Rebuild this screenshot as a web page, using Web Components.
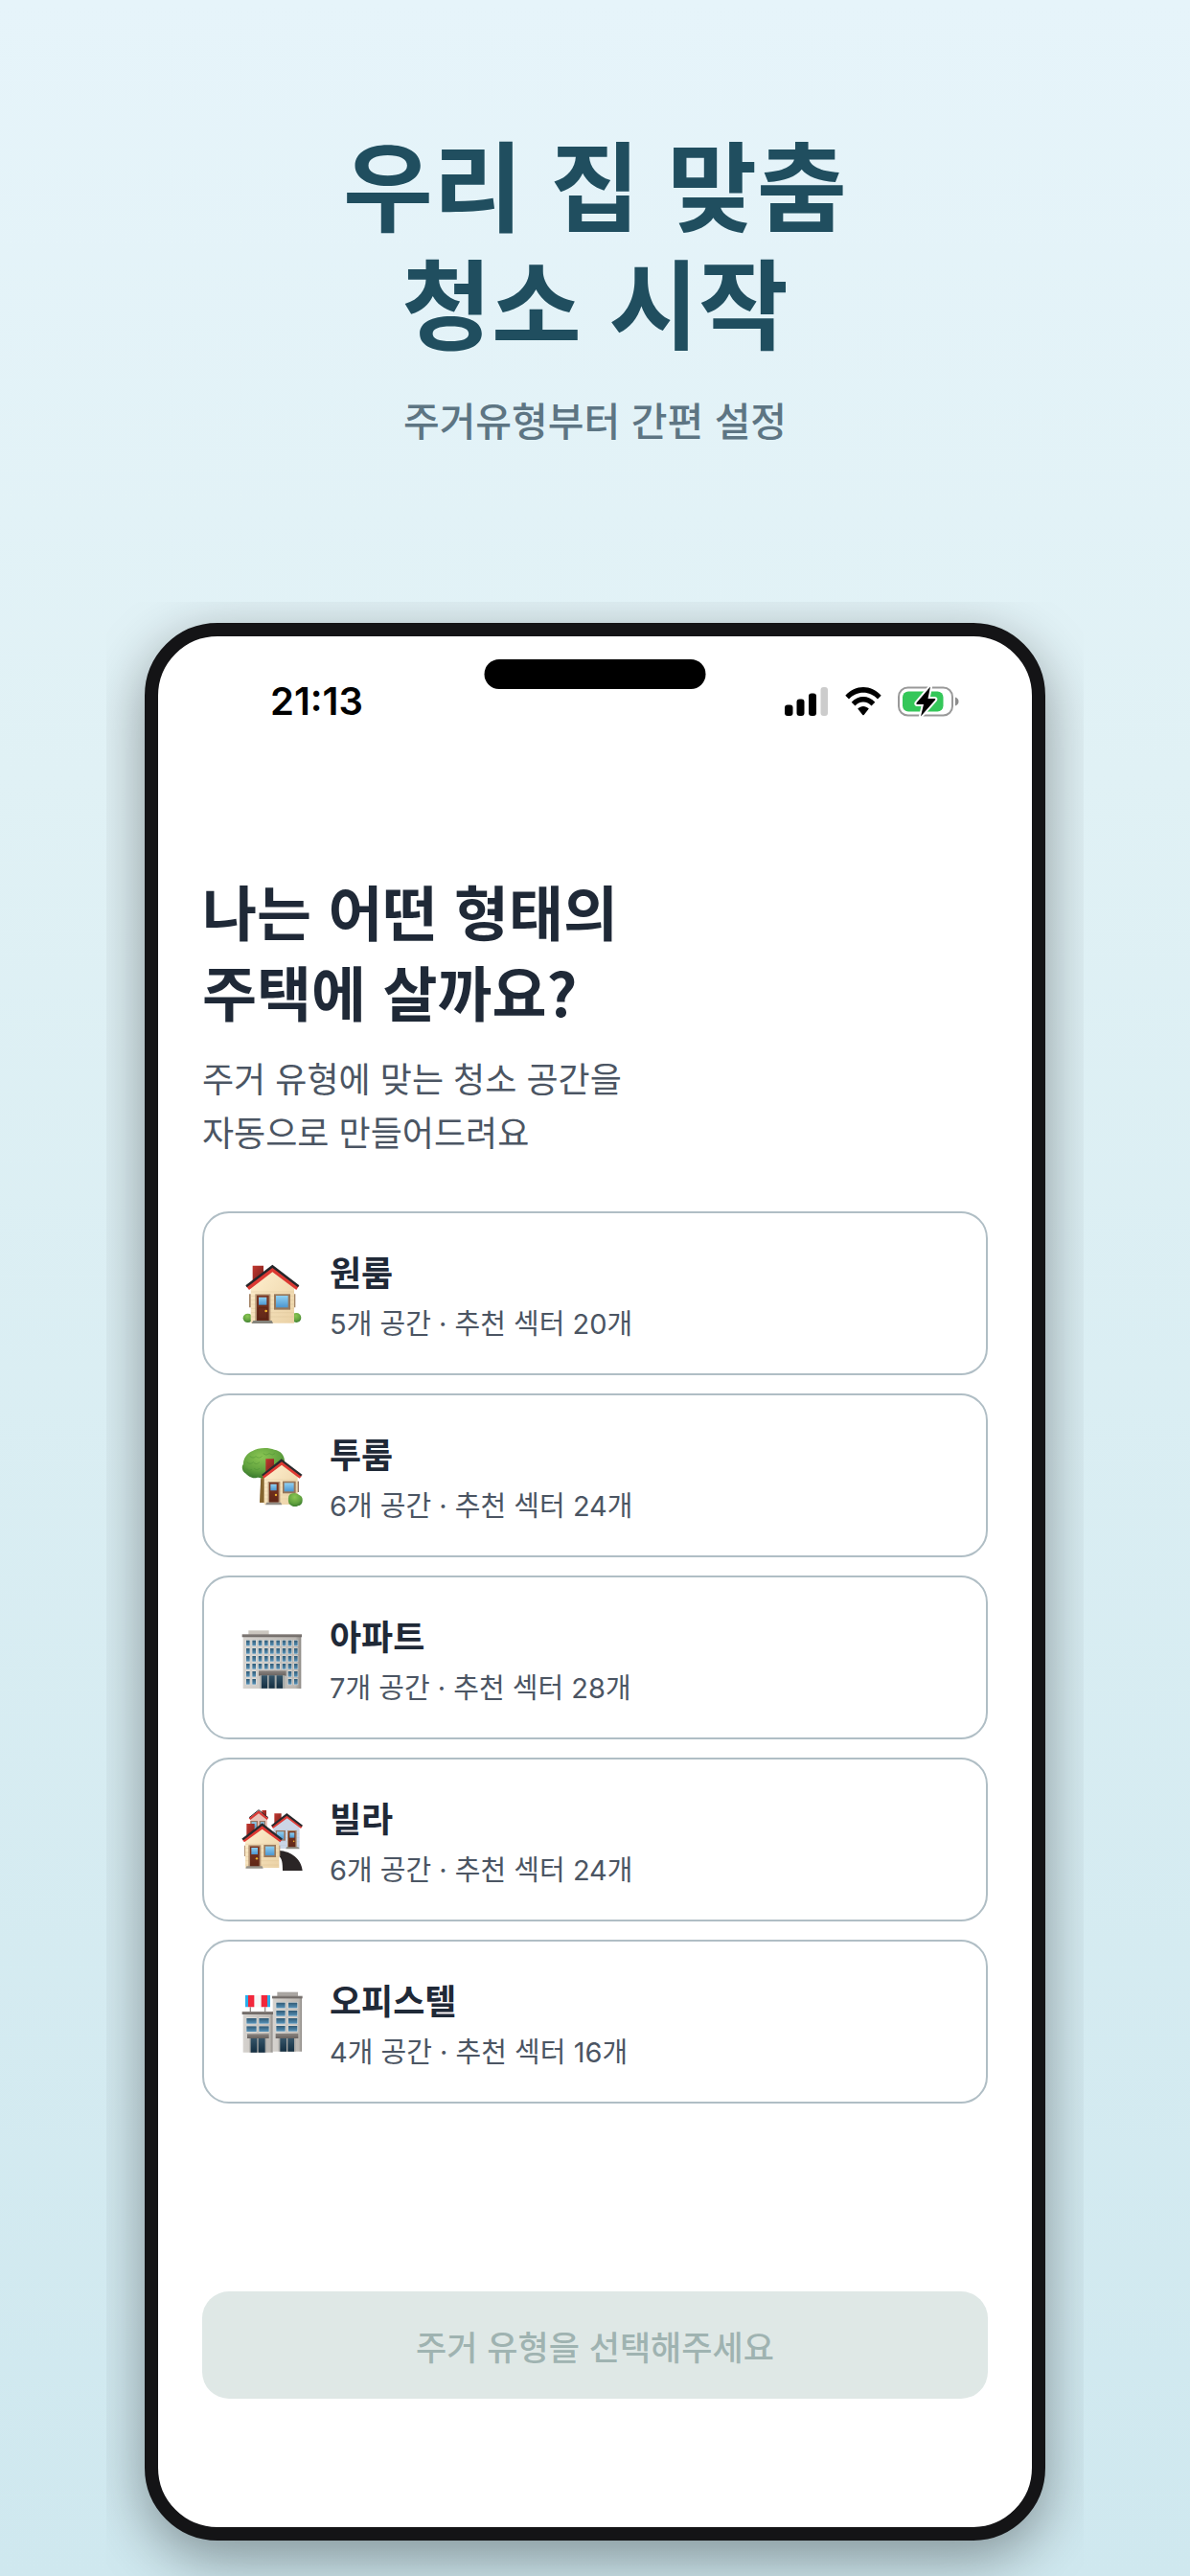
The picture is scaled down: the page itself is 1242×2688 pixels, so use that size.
<!DOCTYPE html>
<html lang="ko">
<head>
<meta charset="utf-8">
<meta name="viewport" content="width=device-width, initial-scale=1">
<title>우리 집 맞춤 청소 시작</title>
<style>
    html {
        min-height: 100%;
        background: linear-gradient(#e6f4fa, #e0f1f5 30%, #cfe8ef);
    }

    body {
        margin: 0;
        font-family: 'Noto Sans CJK KR', sans-serif;
    }
</style>
</head>
<body>

<promo-page>
    <promo-title slot="title">
        우리 집 맞춤<br>청소 시작
        <span slot="subtitle">주거유형부터 간편 설정</span>
    </promo-title>
    <phone-frame>
        <status-bar slot="status" time="21:13"></status-bar>
        <question-header>
            나는 어떤 형태의<br>주택에 살까요?
            <span slot="description">주거 유형에 맞는 청소 공간을<br>자동으로 만들어드려요</span>
        </question-header>
        <house-list>
            <house-option icon="house">원룸<span slot="detail">5개 공간 · 추천 섹터 20개</span></house-option>
            <house-option icon="garden">투룸<span slot="detail">6개 공간 · 추천 섹터 24개</span></house-option>
            <house-option icon="apartment">아파트<span slot="detail">7개 공간 · 추천 섹터 28개</span></house-option>
            <house-option icon="village">빌라<span slot="detail">6개 공간 · 추천 섹터 24개</span></house-option>
            <house-option icon="office">오피스텔<span slot="detail">4개 공간 · 추천 섹터 16개</span></house-option>
        </house-list>
        <submit-button slot="footer">주거 유형을 선택해주세요</submit-button>
    </phone-frame>
</promo-page>

<script>
// every element clones its own template into an open shadow root
function attach(element, html) {
    const template = document.createElement('template');
    template.innerHTML = html;
    element.attachShadow({mode: 'open'});
    element.shadowRoot.appendChild(template.content.cloneNode(true));
}

class PromoPage extends HTMLElement {
    constructor() {
        super();
        attach(this, `
            <style>
                :host {
                    display: flex;
                    flex-direction: column;
                    padding-top: 138px;
                }
                /* the phone's shadow is cut off at the edges of the stage */
                main {
                    margin: 161px 111px 0;
                    padding: 22px 40px 37px;
                    overflow: hidden;
                }
            </style>
            <slot name="title"></slot>
            <main><slot></slot></main>
        `);
    }
}

class PromoTitle extends HTMLElement {
    constructor() {
        super();
        attach(this, `
            <style>
                :host {
                    display: block;
                    text-align: center;
                }
                h1 {
                    margin: 0;
                    color: #204e5f;
                    font-family: 'Liberation Sans', 'Noto Sans CJK KR', sans-serif;
                    font-size: 102px;
                    font-weight: 700;
                    line-height: 123px;
                }
                p {
                    margin: 23px 0 0;
                    color: #5d7583;
                    font-size: 41px;
                    font-weight: 500;
                    line-height: 60px;
                }
            </style>
            <h1><slot></slot></h1>
            <p><slot name="subtitle"></slot></p>
        `);
    }
}

class PhoneFrame extends HTMLElement {
    constructor() {
        super();
        attach(this, `
            <style>
                :host {
                    display: block;
                    border: 14px solid #141416;
                    border-radius: 76px;
                    background: #ffffff;
                    box-shadow: 0 18px 60px rgba(0, 0, 0, 0.38);
                    position: relative;
                }
                .island {
                    position: absolute;
                    top: 24px;
                    left: 50%;
                    transform: translateX(-50%);
                    width: 231px;
                    height: 31px;
                    border-radius: 16px;
                    background: #000000;
                }
                .content {
                    padding: 132px 46px 0;
                }
                footer {
                    padding: 196px 46px 134px;
                }
            </style>
            <div class="island"></div>
            <slot name="status"></slot>
            <div class="content"><slot></slot></div>
            <footer><slot name="footer"></slot></footer>
        `);
    }
}

class StatusBar extends HTMLElement {
    constructor() {
        super();
        attach(this, `
            <style>
                :host {
                    display: flex;
                    justify-content: space-between;
                    align-items: center;
                    height: 64px;
                    padding: 36px 76px 0 117px;
                    color: #000000;
                    font-family: Inter, sans-serif;
                    font-size: 40px;
                    font-weight: 600;
                    line-height: 48px;
                }
                .icons {
                    display: flex;
                    align-items: center;
                    gap: 17px;
                }
                svg {
                    display: block;
                }
            </style>
            <time></time>
            <div class="icons">
                <svg width="46" height="32" viewBox="0 0 46 32" aria-hidden="true">
                    <rect x="0" y="19.500" width="8.500" height="11.500" rx="3"/>
                    <rect x="12.500" y="13.500" width="8" height="17.500" rx="3"/>
                    <rect x="25" y="7.500" width="8" height="23.500" rx="3"/>
                    <rect x="37.500" y="1" width="7.500" height="30" rx="3" fill="#cccccc"/>
                </svg>
                <svg width="38" height="32" viewBox="0 0 38 32" aria-hidden="true">
                    <path d="M0.300 9.800C10.500-1.800 27.500-1.800 37.700 9.800L34 13.600C26 4.600 12 4.600 4 13.600Z"/>
                    <path d="M6.700 16.700C13.500 9 24.500 9 31.300 16.700L27.500 20.600C23 15.200 15 15.200 10.500 20.600Z"/>
                    <path d="M13.200 23.600C16.600 20.200 21.400 20.200 24.800 23.600L19.700 29.900Q19 30.700 18.300 29.900Z"/>
                </svg>
                <svg width="64" height="32" viewBox="0 0 64 32" aria-hidden="true">
                    <rect x="1" y="1.500" width="56" height="29" rx="9.500" fill="none" stroke="#999999" stroke-width="2"/>
                    <path d="M60 11.500C64.700 12.500 64.700 19.500 60 20.500Z" fill="#8c8c8c"/>
                    <rect x="5" y="5.500" width="42.500" height="21" rx="6" fill="#34c759"/>
                    <path d="M34 0.500L19.500 17.500Q18.800 19 20.500 19H27L24 31.500L39 14.500Q40 13 38.500 13H31.500Z" stroke="#ffffff" stroke-width="4" stroke-linejoin="round" paint-order="stroke"/>
                </svg>
            </div>
        `);
    }

    connectedCallback() {
        this.shadowRoot.querySelector('time').textContent = this.getAttribute('time');
    }
}

class QuestionHeader extends HTMLElement {
    constructor() {
        super();
        attach(this, `
            <style>
                :host {
                    display: block;
                }
                h2 {
                    margin: 0;
                    padding-top: 12px;
                    color: #1f2937;
                    font-size: 62px;
                    font-weight: 700;
                    line-height: 84px;
                }
                p {
                    margin: 20px 0 0;
                    color: #4b5563;
                    font-size: 36px;
                    line-height: 56px;
                }
            </style>
            <h2><slot></slot></h2>
            <p><slot name="description"></slot></p>
        `);
    }
}

class HouseList extends HTMLElement {
    constructor() {
        super();
        attach(this, `
            <style>
                :host {
                    display: flex;
                    flex-direction: column;
                    gap: 19px;
                    margin-top: 56px;
                }
            </style>
            <slot></slot>
        `);
    }
}

const gradients = `
    <defs>
        <linearGradient id="cream" x2="1" y2="1"><stop stop-color="#fff0cf"/><stop offset="1" stop-color="#ead1a5"/></linearGradient>
        <linearGradient id="blue" x2="0" y2="1"><stop stop-color="#8fd0f2"/><stop offset="1" stop-color="#4d96cf"/></linearGradient>
        <linearGradient id="brick" x2="1" y2="1"><stop stop-color="#c3372f"/><stop offset="1" stop-color="#76201c"/></linearGradient>
        <linearGradient id="door" x2="0" y2="1"><stop stop-color="#7b3520"/><stop offset="1" stop-color="#5f2617"/></linearGradient>
        <linearGradient id="stone" x2="1" y2="0"><stop stop-color="#d6d3cf"/><stop offset="0.900" stop-color="#bbb7b2"/><stop offset="1" stop-color="#8e8a86"/></linearGradient>
        <linearGradient id="glass" x2="0" y2="1"><stop stop-color="#315a75"/><stop offset="1" stop-color="#5792b8"/></linearGradient>
        <linearGradient id="dark" x2="0" y2="1"><stop stop-color="#355468"/><stop offset="1" stop-color="#142f42"/></linearGradient>
        <linearGradient id="ledge" x2="0" y2="1"><stop stop-color="#8a8480"/><stop offset="1" stop-color="#68625f"/></linearGradient>
        <radialGradient id="leaf" cx="0.450" cy="0.300" r="0.750"><stop stop-color="#8bc653"/><stop offset="0.600" stop-color="#62a33f"/><stop offset="1" stop-color="#35752b"/></radialGradient>
    </defs>
`;

// rows of windows for the larger buildings
function windows(xs, ys, width, height) {
    return ys.map(y => xs.map(x => `
        <rect x="${x - 1.5}" y="${y - 1.5}" width="${width + 3}" height="${height + 3}" fill="#e8e7e4"/>
        <rect x="${x}" y="${y}" width="${width}" height="${height}" fill="url(#glass)"/>
    `).join('')).join('');
}

const icons = {
    house: `
        <ellipse cx="86" cy="256" rx="15" ry="14" fill="url(#leaf)"/>
        <ellipse cx="238" cy="255" rx="15" ry="15" fill="url(#leaf)"/>
        <path d="M90 181h8v42h-8zM228 181h7v42h-7z" fill="#a48567"/>
        <path d="M101 92h34v28l-34 25z" fill="url(#brick)"/>
        <path d="M95 162L164 106L231 162V272H95Z" fill="url(#cream)"/>
        <path d="M96 174h135M96 187h135M96 200h135M96 213h135M96 226h135M96 239h135M96 252h135" stroke="#d9bd91" stroke-width="1"/>
        <path d="M81 157L163 94L245 157L238 168L163 112L90 168Z" fill="#dc3932"/>
        <path d="M79 154L163 89L247 154L243 160L163 99L83 160Z" fill="#25262a"/>
        <path d="M109 181h48v84h-48z" fill="#b29474"/>
        <path d="M114 185h38v80h-38z" fill="url(#door)"/>
        <path d="M120 191h25v24h-25z" fill="url(#blue)"/>
        <path d="M119 224h27v33h-27z" fill="none" stroke="#512012" stroke-width="1.500"/>
        <circle cx="143" cy="234" r="4" fill="#f0b52d"/>
        <path d="M103 264h58l4 9H98z" fill="#85847b"/>
        <path d="M168 181h51v49h-51z" fill="#967659"/>
        <path d="M174 186h38v37h-38z" fill="url(#blue)"/>
    `,
    garden: `
        <path d="M127 183h17l-5 81h-16z" fill="#987435"/>
        <path d="M128 190l-2 73M135 190l-3 73" stroke="#5d4520" stroke-width="2"/>
        <path d="M101 102C116 91 151 90 169 98C189 101 202 116 201 137L160 175C145 190 125 187 116 185C101 191 86 180 81 174C66 165 66 149 72 143C71 124 86 108 101 102Z" fill="url(#leaf)"/>
        <path d="M83 137q10 10 20 0q9 11 20 0M92 118q10 10 19 1q10 9 20-1M105 157q9 9 18 0M80 158q9 10 19 2M134 110q9 9 19 0q10 8 18 0" fill="none" stroke="#4c8f35" stroke-width="1.500"/>
        <path d="M142 127h26v22l-26 20z" fill="url(#brick)"/>
        <path d="M239 197h7v34h-7z" fill="#927360"/>
        <path d="M137 180L192 138L242 180V270H137Z" fill="url(#cream)"/>
        <path d="M138 192h103M138 204h103M138 216h103M138 228h103M138 240h103M138 252h103" stroke="#ddc49a" stroke-width="1"/>
        <path d="M131 180L192 132L255 180L248 188L192 146L136 188Z" fill="#df3933"/>
        <path d="M129 177L191 127L257 177L251 181L192 136L133 181Z" fill="#292a2e"/>
        <path d="M149 198h38v65h-38z" fill="#ad8e70"/>
        <path d="M153 201h29v62h-29z" fill="url(#door)"/>
        <path d="M157 206h19v20h-19z" fill="url(#blue)"/>
        <circle cx="174" cy="240" r="3.500" fill="#f0b52d"/>
        <path d="M145 263h44l4 8h-52z" fill="#918c85"/>
        <path d="M195 197h41v38h-41z" fill="#967659"/>
        <path d="M200 202h30v27h-30z" fill="url(#blue)"/>
        <path d="M218 238q16-9 28 1q12 5 11 18q0 14-14 17q-12 6-22-2q-10-5-8-18q-1-12 5-16z" fill="url(#leaf)"/>
    `,
    apartment: `
        <path d="M88 94h64v14H88z" fill="#cbc6bf"/>
        <path d="M71 110h182v166H71z" fill="url(#stone)"/>
        <path d="M68 106h187v9H68z" fill="url(#ledge)"/>
        ${windows([81, 100, 119, 138, 156, 175, 194, 212, 231], [125, 150, 174, 198], 11, 17)}
        ${windows([81, 100, 212, 231], [222, 246], 11, 17)}
        <path d="M120 220h86v16h-86z" fill="url(#ledge)"/>
        <path d="M124 235h78v41h-78z" fill="#a5aaa9"/>
        <path d="M129 235h18v40h-18zM152 235h18v40h-18zM176 235h19v40h-19z" fill="url(#dark)"/>
    `,
    village: `
        <path d="M130 87h14v23h-14z" fill="url(#brick)"/>
        <path d="M94 112L120 91L147 112V148H94Z" fill="#e9c3b9"/>
        <path d="M89 112L120 88L150 112L146 117L120 97L94 117Z" fill="#d93a36"/>
        <path d="M90 110L120 86L150 110" fill="none" stroke="#303034" stroke-width="3"/>
        <path d="M94 120h23v22H94zM122 120h19v22h-19z" fill="#987663"/>
        <path d="M98 124h15v18H98zM126 124h11v18h-11z" fill="url(#blue)"/>
        <path d="M169 97h22v28l-22 16z" fill="url(#brick)"/>
        <path d="M166 138L209 105L248 138V207H166Z" fill="#cbd5e6"/>
        <path d="M168 149h79M168 161h79M168 173h79M168 185h79M168 197h79" stroke="#b4bfd1" stroke-width="1"/>
        <path d="M160 137L209 101L257 137L252 144L209 112L165 144Z" fill="#dd3b36"/>
        <path d="M159 134L208 96L258 134L254 139L208 104L163 139Z" fill="#27282c"/>
        <path d="M173 150h31v32h-31z" fill="#987663"/>
        <path d="M177 154h22v24h-22z" fill="url(#blue)"/>
        <path d="M210 150h29v54h-29z" fill="#a58467"/>
        <path d="M213 153h22v50h-22z" fill="url(#door)"/>
        <path d="M217 157h15v16h-15z" fill="url(#blue)"/>
        <circle cx="230" cy="184" r="2.500" fill="#efb22c"/>
        <path d="M207 202h37l4 6h-43z" fill="#8b8980"/>
        <path d="M183 213C222 215 254 240 257 276H195C195 252 193 237 183 230Z" fill="#2a2526"/>
        <path d="M82 129h25v31l-25 19z" fill="url(#brick)"/>
        <path d="M75 197h7v34h-7zM182 197h5v34h-5z" fill="#b59777"/>
        <path d="M78 181L132 138L184 181V267H78Z" fill="url(#cream)"/>
        <path d="M79 193h104M79 206h104M79 219h104M79 232h104M79 245h104M79 258h104" stroke="#dabd8e" stroke-width="1"/>
        <path d="M69 179L131 132L193 179L187 187L131 146L75 187Z" fill="#df3933"/>
        <path d="M67 176L131 127L195 176L190 181L131 136L72 181Z" fill="#292a2e"/>
        <path d="M88 196h39v68H88z" fill="#b19070"/>
        <path d="M93 200h29v64H93z" fill="url(#door)"/>
        <path d="M97 204h20v21H97z" fill="url(#blue)"/>
        <circle cx="114" cy="238" r="3.500" fill="#f0b52d"/>
        <path d="M82 262h49l3 7H79z" fill="#96928a"/>
        <path d="M136 195h38v39h-38z" fill="#9b795b"/>
        <path d="M141 200h28v28h-28z" fill="url(#blue)"/>
    `,
    office: `
        <path d="M178 86h65v15h-65z" fill="#a9a5a1"/>
        <path d="M164 101h91v171h-91z" fill="url(#stone)"/>
        <path d="M162 98h95v8h-95z" fill="url(#ledge)"/>
        ${windows([175, 213], [119, 144, 168, 192], 28, 17)}
        <path d="M173 216h71v15h-71z" fill="url(#ledge)"/>
        <path d="M182 231h54v41h-54z" fill="#aaa9a6"/>
        <path d="M187 231h20v41h-20zM211 231h20v41h-20z" fill="url(#dark)"/>
        <path d="M94 132v17M140 132v17" stroke="#918b88" stroke-width="4"/>
        <path d="M78 96h78v37H78z" fill="#f7f7f7"/>
        <path d="M78 96h9v37h-9zM147 96h9v37h-9z" fill="#2aaeea"/>
        <path d="M87 96h19v37H87zM128 96h19v37h-19z" fill="#f2273b"/>
        <path d="M71 152h93v123H71z" fill="url(#stone)"/>
        <path d="M68 147h97v9H68z" fill="url(#ledge)"/>
        ${windows([82, 121], [168, 193], 31, 17)}
        <path d="M84 217h68v14H84z" fill="url(#ledge)"/>
        <path d="M91 231h54v44H91z" fill="#aaa9a6"/>
        <path d="M95 231h20v44H95zM119 231h21v44h-21z" fill="url(#dark)"/>
    `
};

class HouseOption extends HTMLElement {
    constructor() {
        super();
        attach(this, `
            <style>
                :host {
                    display: block;
                }
                button {
                    display: flex;
                    align-items: center;
                    gap: 28px;
                    box-sizing: border-box;
                    width: 100%;
                    min-height: 171px;
                    padding: 0 39px;
                    border: 2px solid #b0bec5;
                    border-radius: 28px;
                    background: #ffffff;
                    color: #1f2937;
                    font: inherit;
                    text-align: left;
                }
                svg {
                    flex: none;
                }
                .text {
                    display: flex;
                    flex-direction: column;
                    gap: 10px;
                    padding-top: 6px;
                }
                .name {
                    font-size: 36px;
                    font-weight: 700;
                    line-height: 48px;
                }
                .detail {
                    color: #4b5563;
                    font-family: Inter, 'Noto Sans CJK KR', sans-serif;
                    font-size: 29px;
                    line-height: 44px;
                }
            </style>
            <button type="button">
                <svg width="64" height="64" viewBox="66 84 192 192" aria-hidden="true"></svg>
                <span class="text">
                    <span class="name"><slot></slot></span>
                    <span class="detail"><slot name="detail"></slot></span>
                </span>
            </button>
        `);
    }

    connectedCallback() {
        this.shadowRoot.querySelector('svg').innerHTML = gradients + icons[this.getAttribute('icon')];
    }
}

class SubmitButton extends HTMLElement {
    constructor() {
        super();
        attach(this, `
            <style>
                :host {
                    display: block;
                }
                button {
                    display: block;
                    box-sizing: border-box;
                    width: 100%;
                    min-height: 112px;
                    padding: 2px 0 0;
                    border: 0;
                    border-radius: 28px;
                    background: #dfe8e6;
                    color: #9fb3b1;
                    font-family: inherit;
                    font-size: 35px;
                    font-weight: 500;
                    line-height: 52px;
                }
            </style>
            <button type="button" disabled><slot></slot></button>
        `);
    }
}

window.customElements.define('promo-page', PromoPage);
window.customElements.define('promo-title', PromoTitle);
window.customElements.define('phone-frame', PhoneFrame);
window.customElements.define('status-bar', StatusBar);
window.customElements.define('question-header', QuestionHeader);
window.customElements.define('house-list', HouseList);
window.customElements.define('house-option', HouseOption);
window.customElements.define('submit-button', SubmitButton);
</script>
</body>
</html>
